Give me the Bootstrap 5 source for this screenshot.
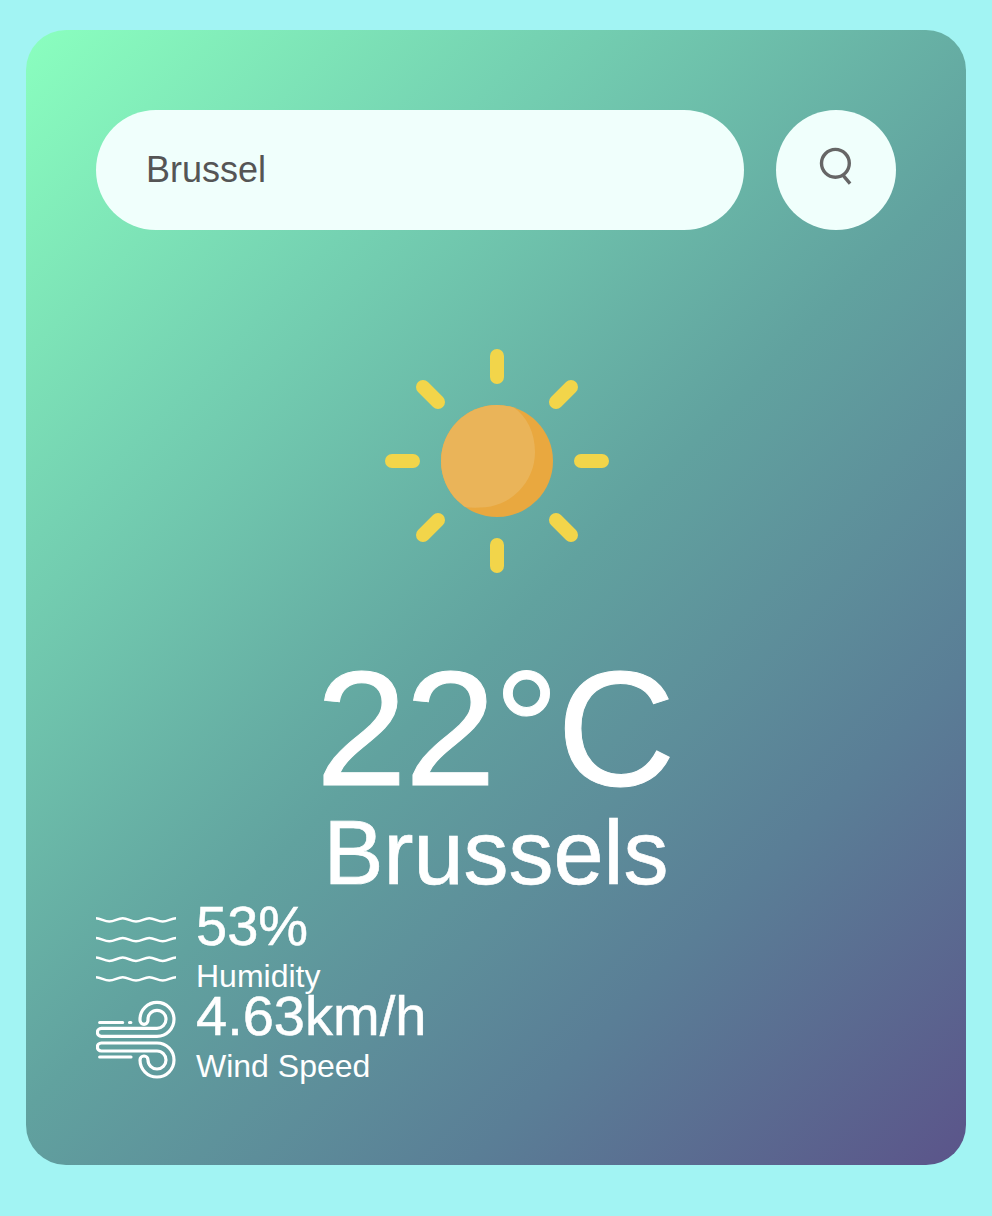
<!DOCTYPE html>
<html lang="en">
<head>
<meta charset="utf-8">
<meta name="viewport" content="width=device-width, initial-scale=1">
<title>Weather</title>
<link href="https://cdn.jsdelivr.net/npm/bootstrap@5.3.0/dist/css/bootstrap.min.css" rel="stylesheet">
<style>
body { background: #a2f4f3; font-family: "Liberation Sans", Arial, sans-serif; }
.weather { width: 940px; height: 1135px; margin-top: 30px; padding: 80px 70px; border-radius: 40px; background: linear-gradient(135deg, #8affbf, #75d2b2 25%, #61a29f 52%, #5a7e96 76%, #5b548a); }
.search { gap: 32px; }
.search .form-control { height: 120px; padding: 0 50px; font-size: 36px; color: #555; background: #f0fffc; }
.search .btn { width: 120px; height: 120px; padding: 0 0 8px; background: #f0fffc; }
.sun { width: 256px; height: 256px; margin: 102.5px 0 49.5px 1px; }
.temp { font-size: 164px; line-height: 184px; font-weight: 400; letter-spacing: -2.2px; margin-top: -1px; margin-left: -3px; -webkit-text-stroke: 1px #fff; }
.city { font-size: 90px; line-height: 104px; font-weight: 400; margin-top: -20px; -webkit-text-stroke: .7px #fff; }
.details { margin-top: -11px; }
.detail { height: 90px; gap: 20px; }
.value { font-size: 56px; line-height: 64px; -webkit-text-stroke: .5px #fff; }
.label { font-size: 32px; line-height: 36px; }
</style>
</head>
<body>
<main class="weather mx-auto text-white">
  <form class="search d-flex align-items-center">
    <input type="text" class="form-control flex-fill rounded-pill border-0 shadow-none" value="Brussel" aria-label="City" spellcheck="false">
    <button type="button" class="btn rounded-circle border-0 flex-shrink-0 d-flex align-items-center justify-content-center" aria-label="Search">
      <svg width="40" height="40" viewBox="0 0 40 40" fill="none" stroke="#666" stroke-width="3.4"><circle cx="19.4" cy="17.300" r="13.9"/><path d="M26.7 28.8l7.4 8.800"/></svg>
    </button>
  </form>
  <section class="d-flex flex-column align-items-center">
    <svg class="sun" viewBox="-128 -128 256 256">
      <defs><clipPath id="disc"><circle r="56"/></clipPath></defs>
      <circle r="56" fill="#e9a83f"/>
      <path d="M-90-90H16V-54C30-45 38-28 38-9A55.500 55.500 0 0 1-17 46.500Q-25 47-32 46L-90 60z" fill="#eab459" clip-path="url(#disc)"/>
      <g stroke="#f2d54a" stroke-width="14" stroke-linecap="round">
        <path d="M0-105v21M0 84v21M-105 0h21M84 0h21M-74-74l15 15M59 59l15 15M74-74l-15 15M-59 59l-15 15"/>
      </g>
    </svg>
    <h1 class="temp mb-0">22°C</h1>
    <h2 class="city mb-0">Brussels</h2>
  </section>
  <section class="details">
    <div class="detail d-flex align-items-start">
      <svg width="80" height="90" viewBox="0 0 80 90" fill="none" stroke="#fff" stroke-width="2.5">
        <defs><path id="wave" d="M0 0C5 0 8 3.3 13.3 3.3S21.600 0 26.700 0 34.700 3.300 40 3.300 48.300 0 53.300 0 61.600 3.300 66.700 3.300 75 0 80 0"/></defs>
        <use href="#wave" y="24.300"/><use href="#wave" y="44"/><use href="#wave" y="63.600"/><use href="#wave" y="83.300"/>
      </svg>
      <div><div class="value">53%</div><div class="label">Humidity</div></div>
    </div>
    <div class="detail d-flex align-items-start">
      <svg width="80" height="110" viewBox="30 -18 240 330" fill="none" stroke="#fff" stroke-width="9.500" stroke-linecap="round">
        <path d="M46 115H213a27 27 0 1 0-27-27v3a12 12 0 0 1-24 0v-3a51 51 0 1 1 51 51H46a12 12 0 0 1 0-24z"/>
        <path d="M46 183H213a27 27 0 1 1-27 27a12 12 0 0 0-24 0a51 51 0 1 0 51-51H46a12 12 0 0 0 0 24z"/>
        <path d="M41 97.500h69M130.500 97.500h4M41 201h94"/>
      </svg>
      <div><div class="value">4.63km/h</div><div class="label">Wind Speed</div></div>
    </div>
  </section>
</main>
<script src="https://cdn.jsdelivr.net/npm/bootstrap@5.3.0/dist/js/bootstrap.bundle.min.js"></script>
</body>
</html>
